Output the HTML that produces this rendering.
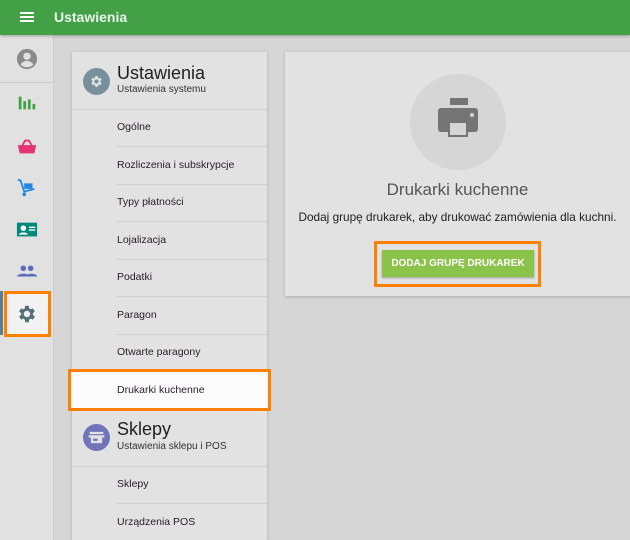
<!DOCTYPE html>
<html><head><meta charset="utf-8"><style>
*{margin:0;padding:0;box-sizing:border-box}
html,body{width:630px;height:540px;overflow:hidden}
body{background:#d6d6d6;font-family:"Liberation Sans",sans-serif;position:relative;color:#222}
.hdr{position:absolute;left:0;top:0;width:630px;height:35px;background:#43a047;box-shadow:0 1px 3px rgba(0,0,0,.3);z-index:3}
.hdr .t{position:absolute;left:54px;top:9px;color:#e8f5e9;font-size:14px;font-weight:bold}
.side{position:absolute;left:0;top:35px;width:54px;height:505px;background:#e1e1e1;border-right:1px solid #ccc}
.ic{position:absolute;left:16px;width:22px;height:22px}
.card{position:absolute;background:#e2e2e2;box-shadow:0 1px 3px rgba(0,0,0,.2)}
.it{position:absolute;left:117px;font-size:10.5px;color:#2a1a2a}
.dv{position:absolute;left:117px;width:150px;height:1px;background:#cfcfcf}
</style></head><body>
<div class="hdr">
<div style="position:absolute;left:20px;top:12px;width:14px;height:2px;background:#fff;box-shadow:0 4px 0 #fff,0 8px 0 #fff"></div>
<div class="t">Ustawienia</div></div>
<div class="side">
<svg class="ic" style="top:13px" viewBox="0 0 24 24"><circle cx="12" cy="12" r="11" fill="#8a8a8a"/><circle cx="12" cy="9" r="4" fill="#e1e1e1"/><path d="M5 18c2-3 5-4 7-4s5 1 7 4c-2 2-4 3-7 3s-5-1-7-3z" fill="#e1e1e1"/></svg>
<div style="position:absolute;left:0;top:47px;width:54px;height:1px;background:#ccc"></div>
<svg class="ic" style="top:57px" viewBox="0 0 24 24"><path d="M3 5h3v14H3zM8 10h3v9H8zM13 8h3v11h-3zM18 13h3v6h-3z" fill="#43a047"/></svg>
<svg class="ic" style="top:101px" viewBox="0 0 24 24"><path d="M2 10h20l-2 9H4z" fill="#e33371"/><path d="M7 10l3-5h4l3 5" stroke="#e33371" stroke-width="2" fill="none"/></svg>
<svg class="ic" style="top:141px" viewBox="0 0 24 24"><path d="M2 4l3 1 4 12 11-3" stroke="#1e88e5" stroke-width="2" fill="none"/><rect x="9" y="8" width="9" height="6" fill="#1e88e5"/><circle cx="9" cy="20" r="2" fill="#1e88e5"/></svg>
<svg class="ic" style="top:184px" viewBox="0 0 24 24"><rect x="1" y="4" width="22" height="15" fill="#00897b"/><circle cx="8" cy="10" r="3" fill="#fff"/><path d="M3 17c1-3 9-3 10 0z" fill="#fff"/><path d="M14 9h7M14 12h7" stroke="#fff" stroke-width="1.5"/></svg>
<svg class="ic" style="top:225px" viewBox="0 0 24 24"><circle cx="8" cy="9" r="3" fill="#5c6bc0"/><circle cx="16" cy="9" r="3" fill="#5c6bc0"/><path d="M1 18c1-4 13-4 14 0zM10 18c1-4 13-4 13 0z" fill="#5c6bc0"/></svg>
<div style="position:absolute;left:0;top:256px;width:3px;height:44px;background:#607d8b"></div>
<div style="position:absolute;left:4px;top:256px;width:47px;height:46px;background:#f2f2f2;border:3px solid #ff8000"></div>
<svg class="ic" style="top:268px" viewBox="0 0 24 24"><path fill="#546e7a" d="M19.4 13a7.5 7.5 0 000-2l2.1-1.6-2-3.5-2.5 1a7 7 0 00-1.7-1L15 3h-4l-.4 2.9a7 7 0 00-1.7 1l-2.5-1-2 3.5L6.6 11a7.5 7.5 0 000 2l-2.1 1.6 2 3.5 2.5-1a7 7 0 001.7 1L11 21h4l.4-2.9a7 7 0 001.7-1l2.5 1 2-3.5zM13 15.5A3.5 3.5 0 1113 8.5a3.5 3.5 0 010 7z" transform="translate(-1 0)"/></svg>
</div>
<div class="card" style="left:72px;top:52px;width:195px;height:488px"></div>
<svg style="position:absolute;left:83px;top:68px" width="27" height="27" viewBox="0 0 24 24"><circle cx="12" cy="12" r="12" fill="#78909c"/><g transform="translate(5.5 5.5) scale(0.54)"><path fill="#e2e2e2" d="M19.4 13a7.5 7.5 0 000-2l2.1-1.6-2-3.5-2.5 1a7 7 0 00-1.7-1L15 3h-4l-.4 2.9a7 7 0 00-1.7 1l-2.5-1-2 3.5L6.6 11a7.5 7.5 0 000 2l-2.1 1.6 2 3.5 2.5-1a7 7 0 001.7 1L11 21h4l.4-2.9a7 7 0 001.7-1l2.5 1 2-3.5zM13 15.5A3.5 3.5 0 1113 8.5a3.5 3.5 0 010 7z" transform="translate(-1 0)"/></g></svg>
<div style="position:absolute;left:117px;top:63px;font-size:18px;color:#222">Ustawienia</div>
<div style="position:absolute;left:117px;top:84px;font-size:10px;color:#333">Ustawienia systemu</div>
<div style="position:absolute;left:72px;top:109px;width:195px;height:1px;background:#cfcfcf"></div>
<div class="it" style="top:121px">Ogólne</div><div class="dv" style="top:146px"></div>
<div class="it" style="top:159px">Rozliczenia i subskrypcje</div><div class="dv" style="top:184px"></div>
<div class="it" style="top:196px">Typy płatności</div><div class="dv" style="top:221px"></div>
<div class="it" style="top:234px">Lojalizacja</div><div class="dv" style="top:259px"></div>
<div class="it" style="top:271px">Podatki</div><div class="dv" style="top:296px"></div>
<div class="it" style="top:309px">Paragon</div><div class="dv" style="top:334px"></div>
<div class="it" style="top:346px">Otwarte paragony</div>
<div style="position:absolute;left:68px;top:369px;width:203px;height:42px;background:#fcfcfc;border:3px solid #ff8000"></div>
<div class="it" style="top:384px">Drukarki kuchenne</div>
<svg style="position:absolute;left:83px;top:424px" width="27" height="27" viewBox="0 0 24 24"><circle cx="12" cy="12" r="12" fill="#7074b8"/><rect x="6" y="7" width="12" height="2" fill="#e2e2e2"/><path d="M5 10h14v2H5z" fill="#e2e2e2"/><path d="M7 12h10v5h-10z" fill="#e2e2e2"/><rect x="9" y="13" width="4" height="2" fill="#7074b8"/></svg>
<div style="position:absolute;left:117px;top:419px;font-size:18px;color:#222">Sklepy</div>
<div style="position:absolute;left:117px;top:441px;font-size:10px;color:#333">Ustawienia sklepu i POS</div>
<div style="position:absolute;left:72px;top:466px;width:195px;height:1px;background:#cfcfcf"></div>
<div class="it" style="top:478px">Sklepy</div><div class="dv" style="top:503px"></div>
<div class="it" style="top:516px">Urządzenia POS</div>
<div class="card" style="left:285px;top:52px;width:350px;height:244px"></div>
<div style="position:absolute;left:410px;top:74px;width:96px;height:96px;border-radius:50%;background:#d6d6d6"></div>
<svg style="position:absolute;left:434px;top:98px" width="48" height="48" viewBox="0 0 48 48"><rect x="16" y="0" width="18" height="7" fill="#757575"/><rect x="4" y="10" width="40" height="24" rx="3" fill="#757575"/><circle cx="38" cy="17" r="2" fill="#d6d6d6"/><rect x="14" y="24" width="20" height="15" fill="#757575"/><rect x="16" y="25" width="16" height="12" fill="#d6d6d6"/></svg>
<div style="position:absolute;left:285px;top:180px;width:345px;text-align:center;font-size:17px;color:#555">Drukarki kuchenne</div>
<div style="position:absolute;left:285px;top:210px;width:345px;text-align:center;font-size:11.8px;color:#222">Dodaj grupę drukarek, aby drukować zamówienia dla kuchni.</div>
<div style="position:absolute;left:374px;top:241px;width:167px;height:46px;border:3px solid #ff8000"></div>
<div style="position:absolute;left:382px;top:250px;width:152px;height:27px;background:#8bc34a;box-shadow:0 1px 2px rgba(0,0,0,.3);color:#fff;font-size:10px;font-weight:bold;text-align:center;line-height:27px">DODAJ GRUPĘ DRUKAREK</div>
</body></html>
